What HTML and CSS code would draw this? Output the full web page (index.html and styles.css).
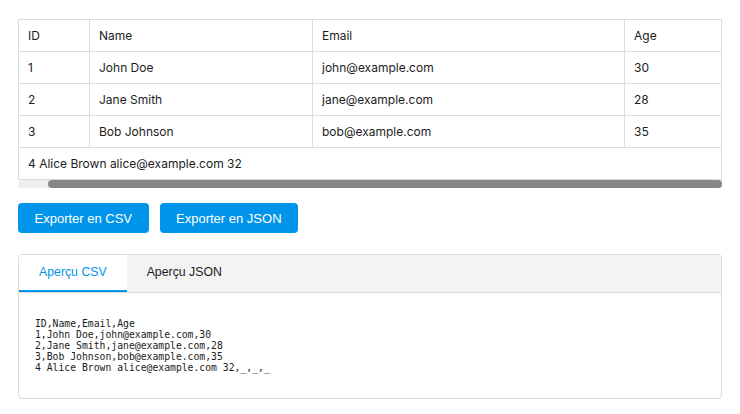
FILE: index.html
```html
<!DOCTYPE html>
<html lang="fr">
<head>
<meta charset="utf-8">
<title>Export</title>
<link rel="stylesheet" href="styles.css">
</head>
<body>
<div class="page">
  <div class="table-wrap">
    <table class="data">
      <colgroup>
        <col class="c-id"><col class="c-name"><col class="c-email"><col>
      </colgroup>
      <thead>
        <tr><th>ID</th><th>Name</th><th>Email</th><th>Age</th></tr>
      </thead>
      <tbody>
        <tr><td>1</td><td>John Doe</td><td>john@example.com</td><td>30</td></tr>
        <tr><td>2</td><td>Jane Smith</td><td>jane@example.com</td><td>28</td></tr>
        <tr><td>3</td><td>Bob Johnson</td><td>bob@example.com</td><td>35</td></tr>
        <tr class="loose"><td colspan="4">4 Alice Brown alice@example.com 32</td></tr>
      </tbody>
    </table>
    <div class="scrollbar"><div class="thumb"></div></div>
  </div>

  <div class="actions">
    <button class="btn">Exporter en CSV</button>
    <button class="btn">Exporter en JSON</button>
  </div>

  <div class="tabs">
    <div class="tab-list">
      <button class="tab active">Aperçu CSV</button>
      <button class="tab">Aperçu JSON</button>
    </div>
    <div class="tab-panel">
<pre class="code">ID,Name,Email,Age
1,John Doe,john@example.com,30
2,Jane Smith,jane@example.com,28
3,Bob Johnson,bob@example.com,35
4 Alice Brown alice@example.com 32,_,_,_</pre>
    </div>
  </div>
</div>
</body>
</html>
```
FILE: styles.css
```css
* { box-sizing: border-box; }
html, body { margin: 0; padding: 0; background: #fff; }
body {
  font-family: Inter, "Liberation Sans", Arial, sans-serif;
  color: #1c1c1c;
}
.page {
  padding: 19px 18px 0 18px;
}
.table-wrap {
  display: flex;
  flex-direction: column;
}
.data {
  width: 100%;
  table-layout: fixed;
  border-collapse: collapse;
  font-size: 12px;
  line-height: 15px;
}
.c-id { width: 71px; }
.c-name { width: 223px; }
.c-email { width: 312px; }
.data th, .data td {
  border: 1px solid #dcdcdc;
  padding: 8px 9px;
  text-align: left;
  font-weight: 400;
  white-space: nowrap;
}
.scrollbar {
  height: 8px;
  background: #efefef;
  border-radius: 4px 0 0 4px;
  display: flex;
  justify-content: flex-end;
}
.thumb {
  width: 674px;
  height: 8px;
  background: #878787;
  border-radius: 4px;
}
.actions {
  display: flex;
  gap: 11px;
  margin-top: 15px;
}
.btn {
  font-family: "Liberation Sans", Arial, sans-serif;
  font-size: 13px;
  line-height: 15px;
  height: 30px;
  padding: 0 16.5px;
  color: #fff;
  background: #0095ea;
  border: none;
  border-radius: 4px;
}
.tabs {
  margin-top: 21px;
  border: 1px solid #dcdcdc;
  border-radius: 4px;
  overflow: hidden;
}
.tab-list {
  display: flex;
  background: #f3f3f3;
  border-bottom: 1px solid #dcdcdc;
}
.tab {
  font-family: "Liberation Sans", Arial, sans-serif;
  font-size: 12.3px;
  line-height: 15px;
  padding: 10px 20px;
  border: none;
  border-bottom: 2px solid transparent;
  background: transparent;
  color: #1c1c1c;
}
.tab.active {
  background: #fff;
  color: #0095ea;
  border-bottom-color: #0095ea;
}
.tab-panel {
  padding: 16px;
}
.code {
  margin: 9px 0;
  font-family: "DejaVu Sans Mono", "Liberation Mono", monospace;
  font-size: 9.75px;
  line-height: 11px;
  color: #1c1c1c;
}
```
